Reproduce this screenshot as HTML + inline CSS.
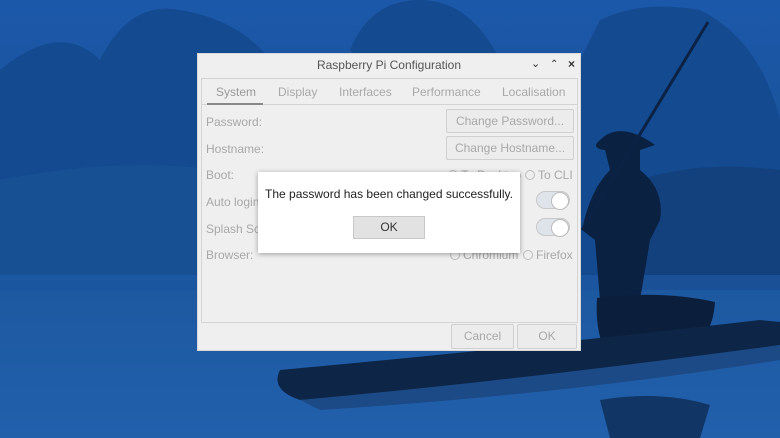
<!DOCTYPE html>
<html><head><style>
*{margin:0;padding:0;box-sizing:border-box}
body{width:780px;height:438px;overflow:hidden;position:relative;font-family:"Liberation Sans",sans-serif;background:#1a5aa8}
.abs{position:absolute}
.win{left:197px;top:53px;width:384px;height:298px;background:#efefef;border:1px solid #d8d8d8}
.t{color:#a8a8a8;font-size:12px}
.btn{position:absolute;border:1px solid #d0d0d0;background:#ececec;border-radius:2px;color:#a8a8a8;font-size:12px;text-align:center}
.tog{position:absolute;width:34px;height:18px;border-radius:9px;background:#dfe3ea;border:1px solid #c8c8c8}
.tog:after{content:"";position:absolute;right:0;top:0;width:16px;height:16px;border-radius:50%;background:#fff;border:1px solid #bbb}
.rad{display:inline-block;width:10px;height:10px;border:1px solid #bbb;border-radius:50%;vertical-align:-1px;margin-right:3px}
</style></head><body>
<svg class="abs" style="left:0;top:0" width="780" height="438">
<defs>
<linearGradient id="sky" x1="0" y1="0" x2="0" y2="1"><stop offset="0" stop-color="#1c58aa"/><stop offset="0.6" stop-color="#17508f"/><stop offset="1" stop-color="#2260ac"/></linearGradient>
</defs>
<rect width="780" height="438" fill="url(#sky)"/>
<path d="M0 70 Q60 20 100 60 Q130 0 180 10 Q240 20 270 60 L270 290 L0 290Z" fill="#134a90"/>
<path d="M350 50 Q370 0 420 0 Q470 0 500 60 L580 60 L600 20 Q640 0 700 10 Q760 40 780 120 L780 290 L560 290Z" fill="#144a90"/>
<path d="M0 180 Q150 150 270 180 L270 280 L0 280Z" fill="#1a5496" opacity=".7"/>
<path d="M640 180 Q700 160 780 170 L780 290 L600 290Z" fill="#123f78" opacity=".8"/>
<rect y="275" width="780" height="163" fill="#2260ad" opacity=".5"/>
<path d="M600 140 Q620 120 655 145 L640 150 L640 170 Q665 190 660 220 L650 240 L640 300 L600 300 L595 240 L582 230 Q590 190 610 170 L605 150 Q590 148 600 140Z" fill="#0b2142"/>
<line x1="708" y1="22" x2="582" y2="230" stroke="#0c2244" stroke-width="3"/>
<path d="M597 298 Q660 290 715 302 Q712 345 680 350 L605 350 Q595 330 597 298Z" fill="#0b1f3c"/>
<path d="M280 370 Q500 350 760 320 L780 322 L780 345 Q560 380 300 400 Q270 390 280 370Z" fill="#0d2546"/>
<path d="M300 400 Q520 380 780 345 L780 360 Q560 395 320 410Z" fill="#1c4a86"/>
<path d="M600 400 Q660 390 710 405 L700 438 L610 438Z" fill="#0e2a52" opacity=".8"/>
</svg>
<div class="abs win">
 <div class="abs" style="left:0;top:4px;width:382px;text-align:center;color:#555;font-size:12px">Raspberry Pi Configuration</div>
 <div class="abs" style="left:333px;top:3px;font-size:11px;color:#333">&#8964;</div>
 <div class="abs" style="left:352px;top:5px;font-size:10px;color:#333">&#8963;</div>
 <div class="abs" style="left:370px;top:3px;font-size:12px;color:#333;font-weight:bold">×</div>
 <div class="abs" style="left:3px;top:24px;width:377px;height:245px;border:1px solid #d4d4d4;background:#efefef"></div>
 <div class="abs" style="left:4px;top:25px;width:375px;height:26px;border-bottom:1px solid #d4d4d4"></div>
 <div class="abs t" style="left:18px;top:31px;color:#999">System</div>
 <div class="abs" style="left:9px;top:49px;width:56px;height:2px;background:#888"></div>
 <div class="abs t" style="left:80px;top:31px">Display</div>
 <div class="abs t" style="left:141px;top:31px">Interfaces</div>
 <div class="abs t" style="left:214px;top:31px">Performance</div>
 <div class="abs t" style="left:304px;top:31px">Localisation</div>
 <div class="abs t" style="left:8px;top:61px">Password:</div>
 <div class="btn" style="left:248px;top:55px;width:128px;height:24px;line-height:22px">Change Password...</div>
 <div class="abs t" style="left:8px;top:88px">Hostname:</div>
 <div class="btn" style="left:248px;top:82px;width:128px;height:24px;line-height:22px">Change Hostname...</div>
 <div class="abs t" style="left:8px;top:114px">Boot:</div>
 <div class="abs t" style="left:250px;top:114px"><span class="rad"></span>To Desktop</div>
 <div class="abs t" style="left:327px;top:114px"><span class="rad"></span>To CLI</div>
 <div class="abs t" style="left:8px;top:141px">Auto login:</div>
 <div class="tog" style="left:338px;top:137px"></div>
 <div class="abs t" style="left:8px;top:168px">Splash Screen:</div>
 <div class="tog" style="left:338px;top:164px"></div>
 <div class="abs t" style="left:8px;top:194px">Browser:</div>
 <div class="abs t" style="left:252px;top:194px"><span class="rad"></span>Chromium</div>
 <div class="abs t" style="left:325px;top:194px"><span class="rad"></span>Firefox</div>
 <div class="btn" style="left:253px;top:270px;width:63px;height:25px;line-height:23px">Cancel</div>
 <div class="btn" style="left:319px;top:270px;width:60px;height:25px;line-height:23px">OK</div>
</div>
<div class="abs" style="left:258px;top:172px;width:262px;height:81px;background:#fff;box-shadow:0 1px 5px rgba(0,0,0,.35)">
 <div class="abs" style="left:0;top:15px;width:262px;text-align:center;font-size:12px;color:#222">The password has been changed successfully.</div>
 <div class="abs" style="left:95px;top:44px;width:72px;height:23px;background:#e2e2e2;border:1px solid #c8c8c8;text-align:center;line-height:21px;font-size:12px;color:#333">OK</div>
</div>
</body></html>
